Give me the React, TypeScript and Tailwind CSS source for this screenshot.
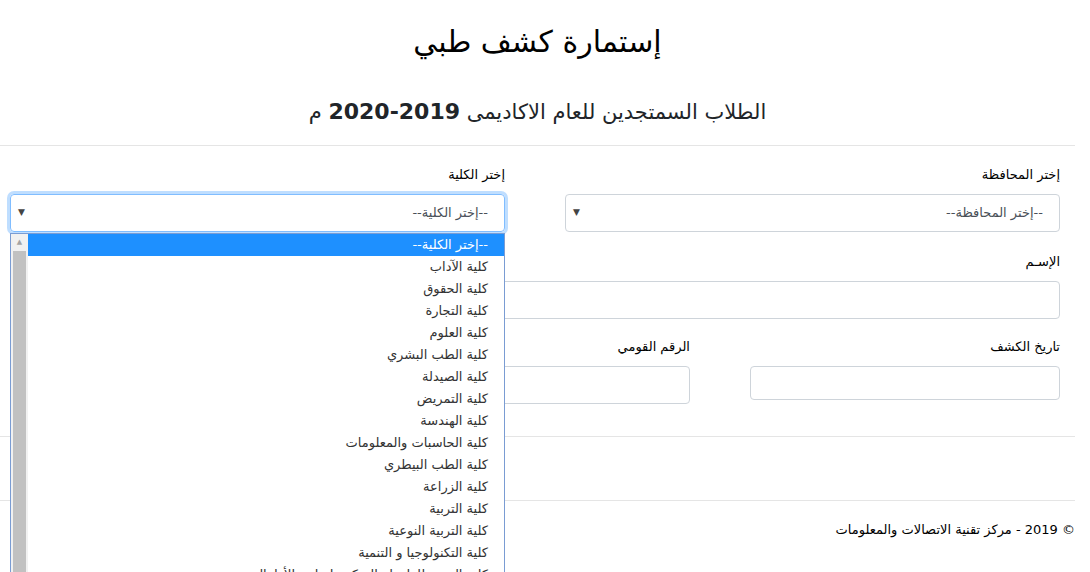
import React from 'react';

const colleges = [
  'كلية الآداب',
  'كلية الحقوق',
  'كلية التجارة',
  'كلية العلوم',
  'كلية الطب البشري',
  'كلية الصيدلة',
  'كلية التمريض',
  'كلية الهندسة',
  'كلية الحاسبات والمعلومات',
  'كلية الطب البيطري',
  'كلية الزراعة',
  'كلية التربية',
  'كلية التربية النوعية',
  'كلية التكنولوجيا و التنمية',
  'كلية التربية للطفولة المبكرة لرياض الأطفال',
];

const Label: React.FC<{ children: React.ReactNode }> = ({ children }) => (
  <label className="block text-[13px] text-black leading-5 mb-[9px]">{children}</label>
);

const App: React.FC = () => {
  return (
    <div dir="rtl" className="w-[1075px] bg-white h-[572px] overflow-hidden font-['DejaVu_Sans','Liberation_Sans',sans-serif]">
      {/* header */}
      <div className="text-center pt-[18px]">
        <h1 className="text-[30px] leading-[48px] text-black">إستمارة كشف طبي</h1>
        <h3 className="text-[21px] leading-[34px] text-[#212529] mt-[29px]">
          الطلاب السمتجدين للعام الاكاديمى <span className="font-bold text-[22px]">2019-2020</span> م
        </h3>
      </div>
      <hr className="mt-[16px] border-[#e5e5e5]" />

      {/* form */}
      <div className="pl-[10px] pr-[15px] pt-[19px]">
        <div className="grid grid-cols-2 gap-x-[60px]">
          <div>
            <Label>إختر المحافظة</Label>
            <div className="h-[38px] border border-[#ced4da] rounded-[4px] flex items-center justify-between pr-[16px] pl-[7px] text-[13px] text-[#495057]">
              <span>--إختر المحافظة--</span>
              <span className="text-[9px] text-[#444]">▼</span>
            </div>
          </div>
          <div className="relative">
            <Label>إختر الكلية</Label>
            <div className="h-[38px] border border-[#80bdff] rounded-[4px] shadow-[0_0_0_3px_rgba(0,123,255,0.25)] flex items-center justify-between pr-[16px] pl-[7px] text-[13px] text-[#495057]">
              <span>--إختر الكلية--</span>
              <span className="text-[9px] text-[#444]">▼</span>
            </div>

            {/* open list */}
            <div className="absolute z-10 top-[68px] left-0 right-0 h-[340px] bg-white border border-[#7a9cd3] flex overflow-hidden text-[13px] text-[#333]">
              <div className="flex-1">
                <div className="h-[22px] bg-[#1e90ff] text-white pr-[16px] flex items-center">--إختر الكلية--</div>
                {colleges.map((c) => (
                  <div key={c} className="h-[22px] pr-[16px] flex items-center whitespace-nowrap">{c}</div>
                ))}
              </div>
              <div className="w-[17px] bg-[#f1f1f1] flex flex-col items-center">
                <div className="h-[17px] text-[7px] text-[#a3a3a3] flex items-center">▲</div>
                <div className="w-[13px] flex-1 bg-[#c1c1c1]" />
              </div>
            </div>
          </div>
        </div>

        <div className="mt-[20px]">
          <Label>الإسـم</Label>
          <div className="h-[38px] border border-[#ced4da] rounded-[4px]" />
        </div>

        <div className="grid grid-cols-3 gap-x-[60px] mt-[18px] items-start">
          <div>
            <Label>تاريخ الكشف</Label>
            <div className="h-[34px] border border-[#ced4da] rounded-[4px]" />
          </div>
          <div>
            <Label>الرقم القومي</Label>
            <div className="h-[38px] border border-[#ced4da] rounded-[4px]" />
          </div>
          <div>
            <Label>رقم التليفون</Label>
            <div className="h-[38px] border border-[#ced4da] rounded-[4px]" />
          </div>
        </div>
      </div>

      <hr className="mt-[32px] border-[#e5e5e5]" />
      <hr className="mt-[63px] border-[#e5e5e5]" />

      <footer className="pt-[19px] text-[13px] leading-5 text-black">
        © 2019 - مركز تقنية الاتصالات والمعلومات
      </footer>
    </div>
  );
};

export default App;
